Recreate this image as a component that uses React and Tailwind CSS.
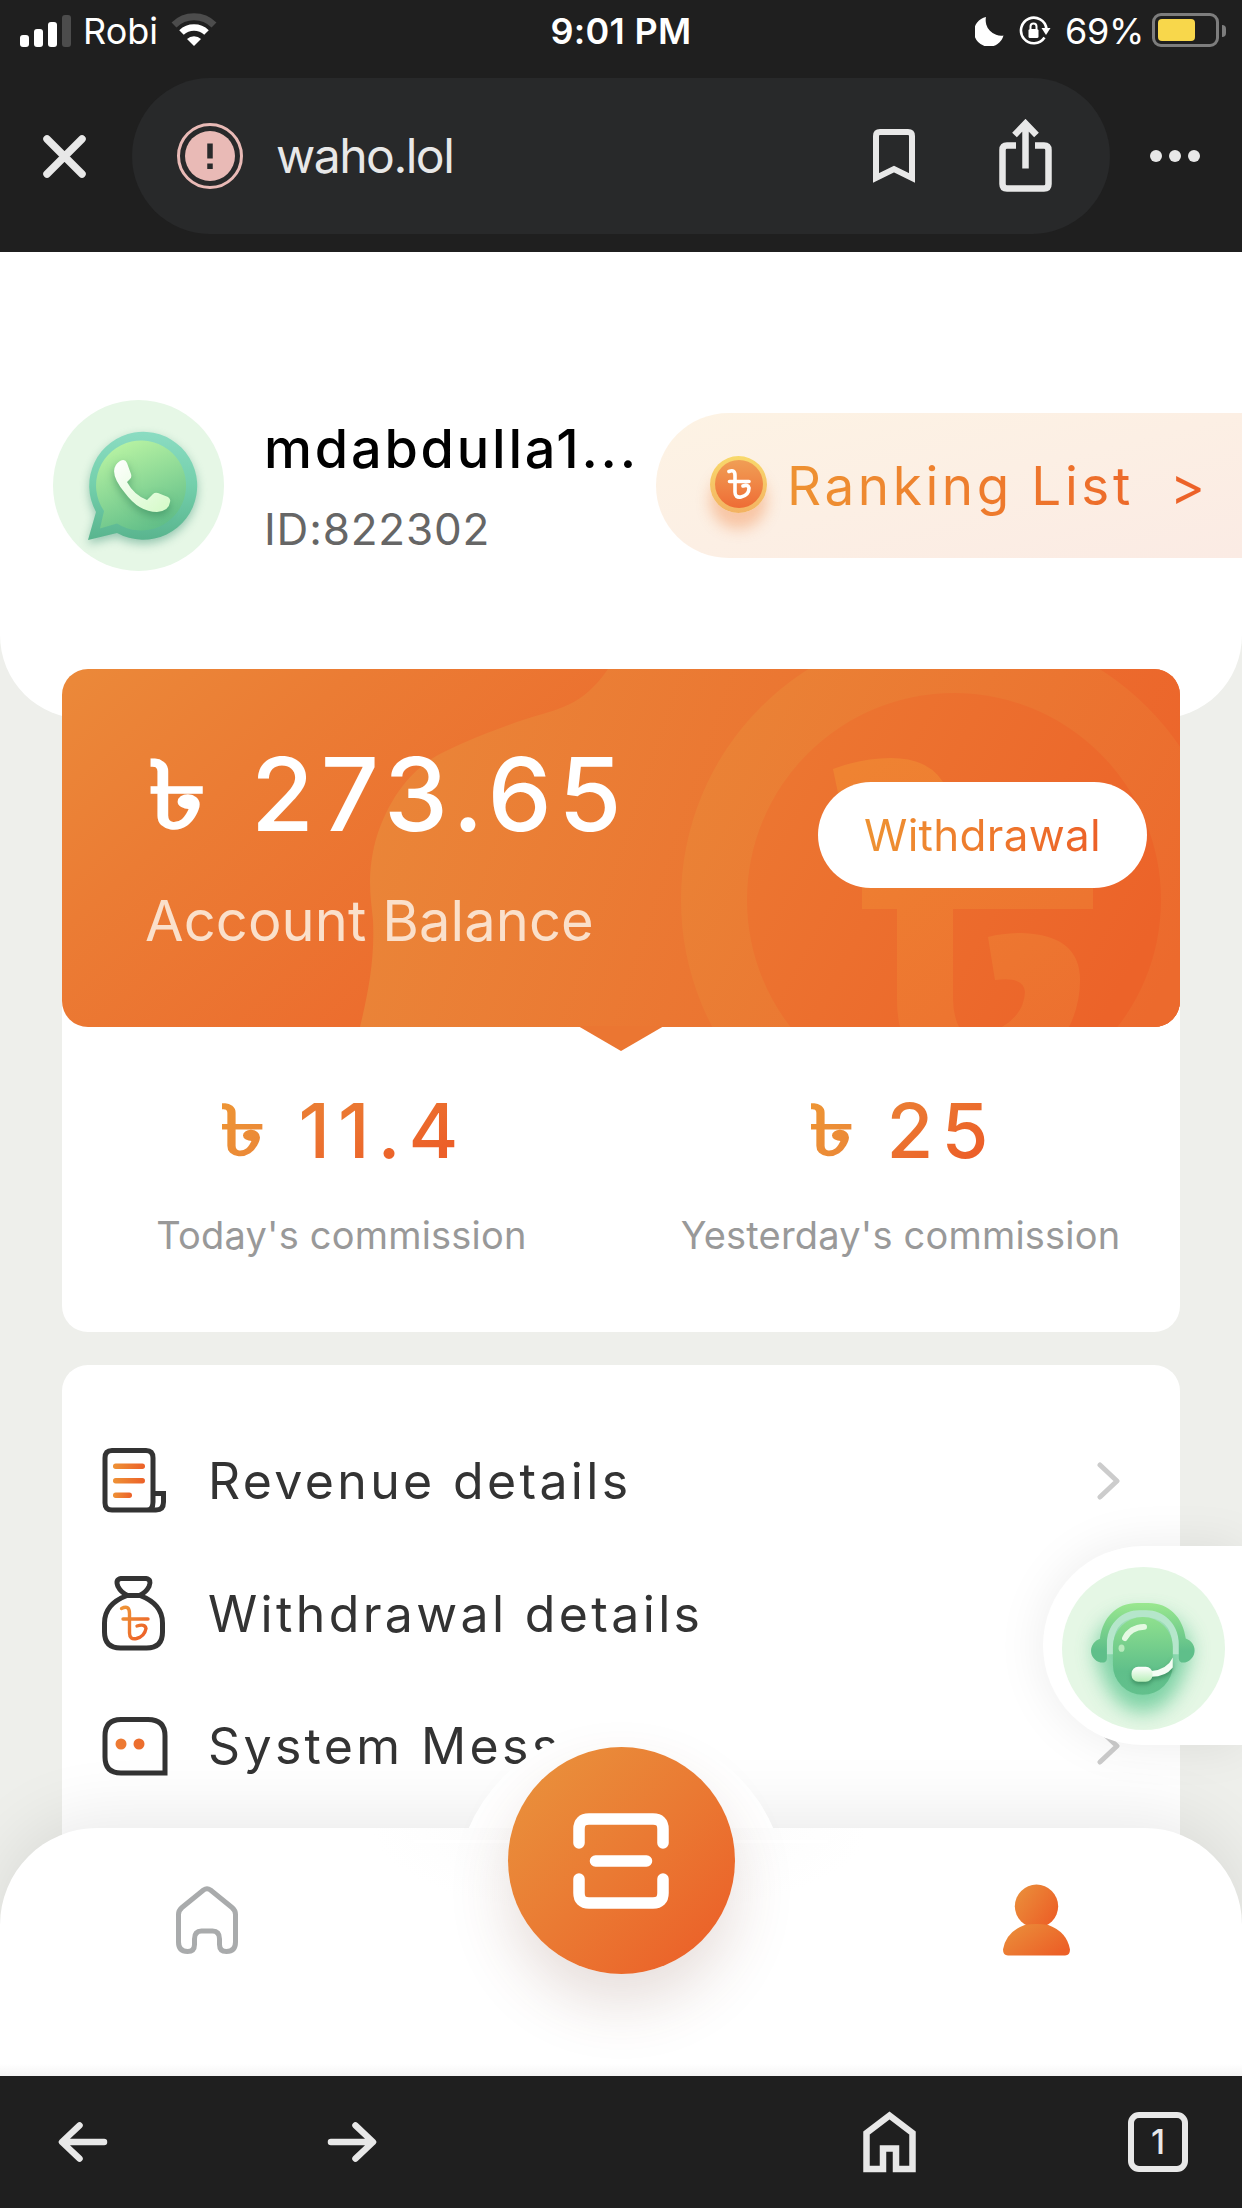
import React from 'react';

const menuItems = [
  { id: 'revenue', label: 'Revenue details', icon: RevenueIcon },
  { id: 'withdrawal', label: 'Withdrawal details', icon: BagIcon },
  { id: 'system', label: 'System Mess...', icon: MessageIcon },
];

const commissions = [
  { id: 'today', value: '11.4', label: "Today's commission" },
  { id: 'yesterday', value: '25', label: "Yesterday's commission" },
];

function StatusBar() {
  return (
    <div className="grid h-[62px] grid-cols-3 items-center pr-4 pl-5 text-[36px] leading-none text-white">
      <div className="flex items-center">
        <div className="mt-[-1px] flex h-8 items-end gap-[5px]">
          <span className="h-3 w-[9px] rounded-[3px] bg-white" />
          <span className="h-[18px] w-[9px] rounded-[3px] bg-white" />
          <span className="h-[25px] w-[9px] rounded-[3px] bg-white" />
          <span className="h-8 w-[9px] rounded-[3px] bg-[#4c4c4c]" />
        </div>
        <span className="ml-3">Robi</span>
        <svg className="mt-[-3px] ml-[13px]" width="46" height="34" viewBox="0 0 46 34" fill="none">
          <path d="M3 12a28.500 28.500 0 0 1 40 0" stroke="#4c4c4c" strokeWidth="7" />
          <path d="M10.500 19.500a18 18 0 0 1 25 0" stroke="#fff" strokeWidth="6.500" />
          <path d="M23 33l-7-7a10 10 0 0 1 14 0z" fill="#fff" />
        </svg>
      </div>
      <div className="-ml-1 text-center font-semibold tracking-[0.3px]">9:01 PM</div>
      <div className="flex items-center justify-end">
        <svg width="29" height="29" viewBox="0 0 29 29" fill="#fff">
          <path d="M11 0A15 15 0 1 0 28.500 18.500 15.500 15.500 0 0 1 11 0z" />
        </svg>
        <svg className="ml-[15px]" width="32" height="30" viewBox="0 0 32 30" fill="none">
          <path d="M25.500 21.500A12.800 12.800 0 1 1 27.500 13" stroke="#fff" strokeWidth="2.600" />
          <path d="M22.500 12h9l-4.500 7z" fill="#fff" />
          <rect x="9.500" y="13" width="10" height="9" rx="1.500" fill="#fff" />
          <path d="M11.500 13v-2.500a3 3 0 0 1 6 0V13" stroke="#fff" strokeWidth="2" />
        </svg>
        <span className="ml-3.5 tracking-[-0.3px]">69%</span>
        <div className="mt-[-2px] ml-2 h-[34px] w-[67px] rounded-[9px] border-[3px] border-[#7d7d7d] p-[3px]">
          <div className="h-full w-[37px] rounded-[4px] bg-[#f8d74b]" />
        </div>
        <span className="ml-[3px] h-3 w-1 rounded-r-full bg-[#7d7d7d]" />
      </div>
    </div>
  );
}

function AddressBar() {
  return (
    <div className="mt-4 flex h-[156px] items-center pl-[43px]">
      <svg width="43" height="43" viewBox="0 0 43 43" stroke="#e8e8e8" strokeWidth="7.500" strokeLinecap="round">
        <path d="M4 4l35 35M39 4L4 39" />
      </svg>
      <div className="ml-[46px] flex h-full w-[978px] items-center rounded-full bg-[#28292a] pl-11">
        <svg width="68" height="68" viewBox="0 0 68 68" fill="none">
          <circle cx="34" cy="34" r="31.500" stroke="#e9bab6" strokeWidth="3" />
          <circle cx="34" cy="34" r="25" fill="#e9bab6" />
          <path d="M34 21.500v15M34 41.500v5.500" stroke="#28292a" strokeWidth="5.500" />
        </svg>
        <span className="ml-8 text-[48px] leading-none tracking-[-1.5px] text-[#e8e8e8]">waho.lol</span>
        <svg className="ml-auto" width="42" height="54" viewBox="0 0 42 54" fill="none" stroke="#e8e8e8" strokeWidth="6">
          <path d="M3 49V7q0-4 4-4h28q4 0 4 4v42l-18-9z" />
        </svg>
        <svg className="mt-[-2px] mr-[58px] ml-[84px]" width="53" height="73" viewBox="0 0 53 73" fill="none" stroke="#e8e8e8" strokeWidth="6.500">
          <path d="M17 26.500H8q-4.500 0-4.500 4.500v34q0 4.500 4.500 4.500h37q4.500 0 4.500-4.500V31q0-4.500-4.500-4.500h-9" />
          <path d="M26.500 49.500V5M15.500 16l11-11.500 11 11.500" />
        </svg>
      </div>
      <div className="ml-10 flex gap-[7px]">
        <span className="size-3 rounded-full bg-[#e8e8e8]" />
        <span className="size-3 rounded-full bg-[#e8e8e8]" />
        <span className="size-3 rounded-full bg-[#e8e8e8]" />
      </div>
    </div>
  );
}

function Avatar() {
  return (
    <div className="flex size-[171px] items-center justify-center rounded-full bg-[#e6f7e6] pl-[7px]">
      <svg className="overflow-visible drop-shadow-[0_4px_5px_rgba(50,140,110,0.45)]" width="110" height="110" viewBox="0 0 110 110">
        <defs>
          <linearGradient id="waOuter" x1="0" y1="0" x2="0" y2="1">
            <stop offset="0" stopColor="#8bdcc2" />
            <stop offset="0.500" stopColor="#73cfab" />
            <stop offset="1" stopColor="#59b48e" />
          </linearGradient>
          <linearGradient id="waInner" x1="0.300" y1="0" x2="0.700" y2="1">
            <stop offset="0" stopColor="#b8f3a3" />
            <stop offset="1" stopColor="#5fbd88" />
          </linearGradient>
          <linearGradient id="waPhone" x1="0" y1="0" x2="1" y2="1">
            <stop offset="0" stopColor="#ffffff" />
            <stop offset="1" stopColor="#d3fac6" />
          </linearGradient>
        </defs>
        <path d="M1 109L9 81A54 54 0 1 1 30 102z" fill="url(#waOuter)" />
        <path d="M13 97.500L17 80A45 45 0 1 1 30 92.500z" fill="url(#waInner)" />
        <path
          className="drop-shadow-[0_4px_4px_rgba(40,120,80,0.5)]"
          d="M33 30q5-3 7 2l4 11q1 3-1 5l-3 3q7 13 20 18l6-6q2-2 5-1l10 4q3 2 2 5-1 9-13 10-18 0-32-19Q19 39 33 30z"
          fill="url(#waPhone)"
        />
      </svg>
    </div>
  );
}

function ProfileHeader() {
  return (
    <div className="flex h-[467px] items-start rounded-b-[84px] bg-white pt-[148px] pl-[53px]">
      <Avatar />
      <div className="mt-[22px] ml-10 flex flex-col gap-[31px] whitespace-nowrap">
        <h1 className="text-[54px] leading-none font-medium tracking-[2.800px] text-black">mdabdulla1...</h1>
        <p className="text-[44px] leading-none tracking-[0.8px] text-[#666]">ID:822302</p>
      </div>
      <div className="mt-[13px] ml-auto flex h-[145px] w-[586px] items-center rounded-l-full bg-linear-to-br from-[#fdf3e4] to-[#fbebe4] pl-[54px]">
        <div className="mt-[-3px] flex size-[57px] items-center justify-center rounded-full bg-linear-to-b from-[#f8d96b] to-[#f3b262] shadow-[0_16px_14px_rgba(240,120,50,0.35)]">
          <div className="flex size-12 items-center justify-center rounded-full bg-linear-to-b from-[#f09e55] to-[#ee6c35]">
            {/* taka sign stamped on the coin */}
            <svg width="24" height="32" viewBox="0 0 24 32" fill="none" stroke="#fff" strokeWidth="3.600" strokeLinecap="round">
              <path d="M2 3.500q6-2.500 6 4V24q0 6 6 5 8-2 8-9-1-4-6-2M2.500 13.500h19.500" />
            </svg>
          </div>
        </div>
        <div className="mt-[2px] ml-5 flex bg-linear-to-r from-[#ee9232] to-[#ec6028] bg-clip-text text-[53px] leading-[1.3] whitespace-nowrap text-transparent">
          <span className="tracking-[3.600px]">Ranking List</span>
          <span className="ml-9">&gt;</span>
        </div>
      </div>
    </div>
  );
}

function BalanceArt() {
  return (
    <svg className="absolute inset-0 rounded-[26px]" width="1118" height="358" viewBox="0 0 1118 358">
      <defs>
        <linearGradient id="cardBase" gradientUnits="userSpaceOnUse" x1="0" y1="20" x2="300" y2="358">
          <stop offset="0" stopColor="#eb8839" />
          <stop offset="0.400" stopColor="#eb7c34" />
          <stop offset="1" stopColor="#ec6d2e" />
        </linearGradient>
        <linearGradient id="cardWave" gradientUnits="userSpaceOnUse" x1="340" y1="60" x2="1050" y2="300">
          <stop offset="0" stopColor="#ea8538" />
          <stop offset="1" stopColor="#ec662b" />
        </linearGradient>
        <linearGradient id="coinRing" gradientUnits="userSpaceOnUse" x1="640" y1="60" x2="1110" y2="300">
          <stop offset="0" stopColor="#ea8336" />
          <stop offset="1" stopColor="#ec6a2d" />
        </linearGradient>
        <linearGradient id="coinFace" gradientUnits="userSpaceOnUse" x1="720" y1="90" x2="1080" y2="280">
          <stop offset="0" stopColor="#ec7631" />
          <stop offset="1" stopColor="#ec6329" />
        </linearGradient>
        <linearGradient id="coinSign" gradientUnits="userSpaceOnUse" x1="800" y1="90" x2="1040" y2="380">
          <stop offset="0" stopColor="#ef8332" />
          <stop offset="1" stopColor="#ec6e2f" />
        </linearGradient>
      </defs>
      <rect width="1118" height="358" fill="url(#cardBase)" />
      <path
        d="M546 0C520 38 495 40 464 50C425 63 395 76 376 86C340 106 320 145 312 178C305 210 309 230 311 251C313 290 306 325 298 358H1118V0z"
        fill="url(#cardWave)"
      />
      <circle cx="892" cy="231" r="273" fill="url(#coinRing)" />
      <circle cx="892" cy="231" r="207" fill="url(#coinFace)" />
      <g fill="url(#coinSign)">
        <path d="M771 100Q800 89 829 89Q866 89 881 113Q891 128 891 150V184H1031V240H891V330Q891 346 897 358H838Q835 346 835 330V240H800V184H835V160Q832 135 780 143z" />
        <path d="M926 268Q942 264 960 264Q1018 266 1018 311Q1018 336 1007 358H940Q962 345 963 323Q962 307 933 311z" />
      </g>
    </svg>
  );
}

function BalanceCard() {
  return (
    <section className="relative mx-[62px] mt-[-50px] h-[663px] rounded-[26px] bg-white">
      <div className="relative flex h-[358px] items-start justify-between pr-[33px] pl-[83px]">
        <BalanceArt />
        <div className="relative pt-[74px]">
          <div className="flex items-center text-[102px] leading-none font-medium text-white">
            <span className="ml-[3px] inline-block origin-left scale-x-125 text-[94px] font-bold">৳</span>
            <span className="ml-14 tracking-[6.800px]">273.65</span>
          </div>
          <p className="mt-12 text-[56px] leading-none tracking-[0.1px] text-[#fae0cb]">Account Balance</p>
        </div>
        <button className="relative mt-[113px] h-[106px] w-[329px] rounded-full bg-white">
          <span className="bg-linear-to-r from-[#ee9232] to-[#ec6028] bg-clip-text text-[44px] leading-none tracking-[0.3px] text-transparent">
            Withdrawal
          </span>
        </button>
        <span className="absolute top-[357px] left-[516px] h-[25px] w-[86px] bg-[#eb7632] [clip-path:polygon(0_0,100%_0,50%_100%)]" />
      </div>
      <div className="grid grid-cols-2 pt-[65px] text-center">
        {commissions.map((item) => (
          <div key={item.id} className="flex flex-col items-center">
            <div className="flex items-center text-[76px] leading-none font-medium text-transparent">
              <span className="ml-1 inline-block w-[42px] origin-left scale-x-[1.3] bg-linear-to-br from-[#ee9634] to-[#ea8438] bg-clip-text text-left text-[70px] font-bold">
                ৳
              </span>
              <span className="ml-9 bg-linear-to-br from-[#ea8236] to-[#ec5f28] to-80% bg-clip-text tracking-[8px]">
                {item.value}
              </span>
            </div>
            <p className="mt-12 text-[38px] leading-none tracking-[0.2px] text-[#999]">{item.label}</p>
          </div>
        ))}
      </div>
    </section>
  );
}

function RevenueIcon() {
  return (
    <svg width="66" height="66" viewBox="0 0 66 66" fill="none">
      <defs>
        <linearGradient id="lineFill" x1="0" x2="1" y1="0" y2="0">
          <stop offset="0" stopColor="#ee9236" />
          <stop offset="1" stopColor="#ec6028" />
        </linearGradient>
      </defs>
      <path
        d="M51 44V10q0-7.500-7-7.500H10Q3 2.500 3 10v45q0 7 7 7h44q7.500 0 7.500-8v-8.500H51V54q0 8-6 8"
        stroke="#333"
        strokeWidth="5"
      />
      <rect x="11" y="15.500" width="32" height="5.500" rx="2.700" fill="url(#lineFill)" />
      <rect x="11" y="30" width="32" height="5.500" rx="2.700" fill="url(#lineFill)" />
      <rect x="11" y="44.500" width="19" height="5.500" rx="2.700" fill="url(#lineFill)" />
    </svg>
  );
}

function BagIcon() {
  return (
    <svg width="66" height="76" viewBox="0 0 66 76" fill="none" stroke="#333" strokeWidth="5">
      <defs>
        <linearGradient id="bagSign" gradientUnits="userSpaceOnUse" x1="19" y1="36" x2="46" y2="58">
          <stop offset="0" stopColor="#ee9236" />
          <stop offset="1" stopColor="#ec6028" />
        </linearGradient>
      </defs>
      <path d="M19 2.500h25q6 1 3 8-3 6-9.500 9h-12q-6.500-3-9.500-9-3-7 3-8z" />
      <path d="M25 19.500Q2.500 28 2.500 47v9q0 16 16 16h26q16 0 16-16v-9Q60.500 28 38 19.500z" />
      <path
        d="M19.500 32.500q8-4 8 5V57q0 7 7 5.500 8-2 9.500-10-1-5-9-2.500M21 43h25"
        stroke="url(#bagSign)"
        strokeWidth="3.400"
        strokeLinecap="round"
      />
    </svg>
  );
}

function MessageIcon() {
  return (
    <svg width="66" height="59" viewBox="0 0 66 59" fill="none">
      <path d="M63 56H19Q3 56 3 40V19Q3 2.500 19 2.500h27Q63 2.500 63 19z" stroke="#333" strokeWidth="5" />
      <circle cx="19" cy="27" r="5.500" fill="#ed7a33" />
      <circle cx="37" cy="27" r="5.500" fill="#ec6e2e" />
    </svg>
  );
}

function Menu() {
  return (
    <section className="mx-[62px] mt-[33px] flex-1 rounded-t-[26px] bg-white pt-[50px] pr-[60px] pl-10">
      {menuItems.map((item) => (
        <div key={item.id} className="flex h-[132.5px] items-center">
          <div className="w-[106px]">
            <item.icon />
          </div>
          <span className="text-[50px] leading-none tracking-[3.350px] whitespace-nowrap text-[#333]">{item.label}</span>
          <svg className="ml-auto" width="23" height="38" viewBox="0 0 23 38" fill="none" stroke="#ccc" strokeWidth="5" strokeLinecap="round" strokeLinejoin="round">
            <path d="M3 3l17 16L3 35" />
          </svg>
        </div>
      ))}
    </section>
  );
}

function SupportButton() {
  return (
    <button className="absolute top-[1294px] right-0 flex h-[199px] w-[199px] items-center rounded-l-full bg-white pt-[5px] pl-[19px] shadow-[0_0_50px_rgba(0,0,0,0.08)]">
      <svg className="rounded-full bg-[#e5f7e5]" width="163" height="163" viewBox="246 438 490 490" fill="none">
        <defs>
          <linearGradient id="headGreen" gradientUnits="userSpaceOnUse" x1="0" y1="550" x2="0" y2="820">
            <stop offset="0" stopColor="#9ae88f" />
            <stop offset="0.750" stopColor="#5fbf8a" />
            <stop offset="1" stopColor="#62c08c" />
          </linearGradient>
          <linearGradient id="bandGreen" gradientUnits="userSpaceOnUse" x1="0" y1="545" x2="0" y2="690">
            <stop offset="0" stopColor="#9ae88f" />
            <stop offset="1" stopColor="#5fbf8a" />
          </linearGradient>
          <linearGradient id="micWhite" gradientUnits="userSpaceOnUse" x1="0" y1="738" x2="0" y2="783">
            <stop offset="0" stopColor="#ffffff" />
            <stop offset="1" stopColor="#b9efba" />
          </linearGradient>
          <filter id="headGlow" x="-50%" y="-50%" width="200%" height="200%">
            <feGaussianBlur stdDeviation="30" />
          </filter>
        </defs>
        <path d="M345 690q15-110 144-110t144 110q-40 180-144 185-104-5-144-185z" fill="#5cc690" opacity="0.75" filter="url(#headGlow)" />
        <path d="M390 700V670Q395 578 489 578t99 92v30" stroke="#b5e6cb" strokeWidth="20" />
        <path
          d="M360 653C368 590 410 546 472 546h34c62 0 104 44 112 107 36 12 36 62-2 72-12 2-19-3-19-13V660c-4-52-46-92-98-92h-20c-52 0-94 40-98 92v52c0 10-7 15-19 13-38-10-38-60 0-72z"
          fill="url(#bandGreen)"
        />
        <rect x="399" y="588" width="180" height="234" rx="90" fill="url(#headGreen)" />
        <path d="M435 652q16-32 58-34" stroke="#e4f9e2" strokeWidth="17" strokeLinecap="round" />
        <ellipse cx="425" cy="682" rx="9" ry="11" fill="#b7eabc" />
        <g className="drop-shadow-[0_8px_6px_rgba(30,100,60,0.5)]">
          <path d="M515 751q48-6 64-41v30q-22 28-64 28z" fill="#f4fdf4" />
          <rect x="455" y="738" width="63" height="45" rx="20" fill="url(#micWhite)" />
        </g>
      </svg>
    </button>
  );
}

function BottomNav() {
  return (
    <nav className="absolute inset-x-0 bottom-0 h-[248px] rounded-t-[97px] bg-white shadow-[0_-10px_70px_rgba(0,0,0,0.09)]">
      <div className="absolute top-[-100px] left-[455px] size-[332px] rounded-full bg-white" />
      <div className="absolute top-0 left-[370px] h-[90px] w-[500px] bg-[radial-gradient(ellipse_at_top,#fafafa,#fff_70%)]" />
      <div className="absolute top-3 left-[414px] h-[3px] w-[414px] bg-white" />
      <div className="absolute inset-x-0 bottom-0 h-3 bg-linear-to-b from-white to-[#f4f4f4]" />
      <div className="relative grid grid-cols-3 justify-items-center">
        <svg className="mt-[58px]" width="62" height="68" viewBox="0 0 62 68" fill="none" stroke="#a9abac" strokeWidth="5">
          <path d="M27.500 4q3.500-2.500 7 0L56 21.500q3.500 3 3.500 7V56q0 9.500-9 9.500-7 0-7-7V53q0-8-7-8h-11q-7 0-7 8v5.500q0 7-7 7-9 0-9-9.500V28.500q0-4 3.500-7z" />
        </svg>
        <div className="mt-[-81px] flex size-[227px] items-center justify-center rounded-full bg-linear-to-br from-[#e98f3b] from-10% via-[#ea7a33] to-[#eb6129] to-90% shadow-[0_30px_60px_rgba(110,60,40,0.17)]">
          <svg width="96" height="96" viewBox="0 0 96 96" fill="none" stroke="#fff" strokeWidth="11.500" strokeLinecap="round">
            <path d="M6 30V16Q6 6 16 6h64q10 0 10 10v14M6 66v14q0 10 10 10h64q10 0 10-10V66M22.500 48h51" />
          </svg>
        </div>
        <svg className="mt-14 ml-[2px]" width="67" height="72" viewBox="0 0 68 72">
          <defs>
            <linearGradient id="person" x1="0" y1="0" x2="1" y2="0.700">
              <stop offset="0" stopColor="#ea923c" />
              <stop offset="1" stopColor="#ec6027" />
            </linearGradient>
          </defs>
          <circle cx="34" cy="22" r="22" fill="url(#person)" />
          <path d="M0 66Q3 48 22 41q12-2 24 0 19 7 22 25 0 6-5 6H5q-5 0-5-6z" fill="url(#person)" />
        </svg>
      </div>
    </nav>
  );
}

function BrowserToolbar() {
  return (
    <footer className="flex h-[132px] items-center bg-[#1f1f1f] pl-[58px]">
      <svg width="50" height="42" viewBox="0 0 51 42" fill="none" stroke="#e8e8e8" strokeWidth="6.500" strokeLinecap="round" strokeLinejoin="round">
        <path d="M47 21H4.500M22 4L4 21l18 17" />
      </svg>
      <svg className="ml-[219px]" width="50" height="42" viewBox="0 0 51 42" fill="none" stroke="#e8e8e8" strokeWidth="6.500" strokeLinecap="round" strokeLinejoin="round">
        <path d="M4 21h42.500M29 4l18 17-18 17" />
      </svg>
      <svg className="ml-[486px]" width="53" height="62" viewBox="0 0 53 62" fill="none" stroke="#e8e8e8" strokeWidth="6.500">
        <path d="M3.500 58V22l23-17.500 23 17.500v36H33V37.500H20V58z" />
      </svg>
      <div className="ml-[212px] flex size-[60px] items-center justify-center rounded-[11px] border-[6px] border-[#e8e8e8] text-[34px] leading-none font-medium text-[#e8e8e8]">
        1
      </div>
    </footer>
  );
}

export default function App() {
  return (
    <div className="flex h-[2208px] w-[1242px] flex-col overflow-hidden bg-[#eeefeb] font-[Inter,sans-serif]">
      <header className="h-[252px] bg-[#1f1f1f]">
        <StatusBar />
        <AddressBar />
      </header>
      <main className="relative flex h-[1824px] flex-col overflow-hidden">
        <ProfileHeader />
        <BalanceCard />
        <Menu />
        <SupportButton />
        <BottomNav />
      </main>
      <BrowserToolbar />
    </div>
  );
}
